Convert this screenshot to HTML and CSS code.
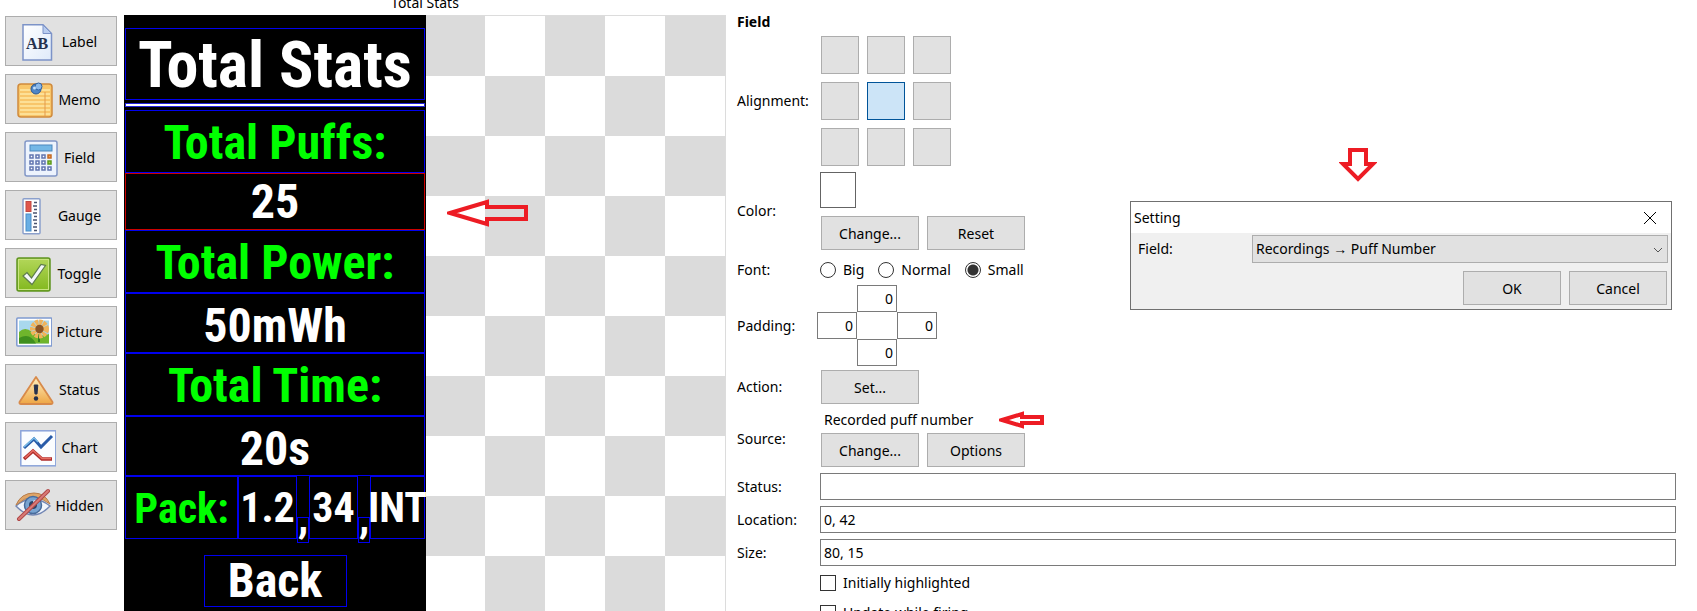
FILE: index.html
```html
<!DOCTYPE html>
<html lang="en">
<head>
<meta charset="utf-8">
<title>Total Stats</title>
<link rel="stylesheet" href="styles.css">
</head>
<body>
<div class="editor">
  <nav class="tools" aria-label="Elements">
    <button class="btn tool"><svg class="icon" viewBox="0 0 36 36"><defs><linearGradient id="paper" x1="0" y1="0" x2="1" y2="1"><stop offset="0" stop-color="#fff"/><stop offset="1" stop-color="#dfeafa"/></linearGradient></defs><path d="M2 .8H22L30.500 9.500V36H2Z" fill="url(#paper)" stroke="#7c93c8" stroke-width="1.500"/><path d="M22 1V9.500H30.500Z" fill="#b9cdf0" stroke="#7c93c8"/><text x="16" y="25" class="glyph">AB</text></svg>Label</button>
    <button class="btn tool"><svg class="icon" viewBox="0 0 36 36"><rect x="1" y="2" width="34" height="33" rx="3" fill="#f8c66a" stroke="#d08a3c" stroke-width="1.500"/><path d="M3 8H33M3 12H33M3 16H33M3 20H33M3 24H33M3 28H33M3 32H33" stroke="#fde096" stroke-width="2"/><path d="M28 10V34" stroke="#e39a4c"/><circle cx="19" cy="7" r="5" fill="#4f86c6" stroke="#2a5794"/><circle cx="21.500" cy="4.500" r="3.500" fill="#8bb8e8" stroke="#2f62a3"/><circle cx="17.500" cy="6" r="1.500" fill="#c5e0fa"/></svg>Memo</button>
    <button class="btn tool"><svg class="icon" viewBox="0 0 36 36"><rect x="2" y="1" width="32" height="35" rx="2" fill="#edf3fd" stroke="#8196c6" stroke-width="1.500"/><rect x="7" y="5" width="22" height="6" fill="#74b7e6" stroke="#4c87bd"/><g fill="#fff" stroke="#6075b0" stroke-width="1.500"><rect x="7" y="15" width="3" height="3"/><rect x="13" y="15" width="3" height="3"/><rect x="19" y="15" width="3" height="3"/><rect x="7" y="21" width="3" height="3"/><rect x="13" y="21" width="3" height="3"/><rect x="19" y="21" width="3" height="3"/><rect x="7" y="27" width="3" height="3"/><rect x="13" y="27" width="3" height="3"/><rect x="19" y="27" width="3" height="3"/><rect x="25" y="27" width="3" height="3"/></g><rect x="25" y="15" width="3" height="3" fill="#f3a35c" stroke="#c46a24" stroke-width="1.500"/><rect x="25" y="21" width="3" height="3" fill="#a8d84a" stroke="#5d9a1c" stroke-width="1.500"/></svg>Field</button>
    <button class="btn tool"><svg class="icon" viewBox="0 0 36 36"><rect x="6" y=".8" width="17" height="35" rx="1" fill="#fff" stroke="#8ba0cc" stroke-width="1.500"/><rect x="9" y="3.500" width="5" height="10" fill="#e0574c" stroke="#c04a44"/><rect x="9" y="16" width="5" height="17" fill="#69aee4" stroke="#4a8dc8"/><path d="M17 4.500H20M16 8H20M17 11.500H20M16 15H20M17 18.500H20M16 22H20M17 25.500H20M16 29H20M17 32.500H20" stroke="#4a5470" stroke-width="1.500"/></svg>Gauge</button>
    <button class="btn tool"><svg class="icon" viewBox="0 0 36 36"><defs><linearGradient id="green" x1="0" y1="0" x2="0" y2="1"><stop offset="0" stop-color="#b3d75a"/><stop offset="1" stop-color="#82b81e"/></linearGradient></defs><rect x="1" y="2" width="33" height="33" rx="2" fill="url(#green)" stroke="#5f9420" stroke-width="1.500"/><rect x="2.500" y="3.500" width="30" height="30" fill="none" stroke="#c8e480"/><path d="M7 20L11 16.500L15.500 22L25 8.500L29.500 9.500L16 28.500Z" fill="#f4f7fa" stroke="#5d7c4a" stroke-width="1.200"/></svg>Toggle</button>
    <button class="btn tool"><svg class="icon" viewBox="0 0 36 36"><rect x="0.800" y="4" width="35" height="28" rx="1" fill="#fff" stroke="#7f9ad0" stroke-width="1.500"/><rect x="3" y="6.500" width="30" height="23" fill="#a9d8ee"/><path d="M3 18Q9 12 16 18T33 20V29.500H3Z" fill="#6fb52c"/><path d="M3 24Q14 18 20 29.500H3Z" fill="#3f8f1e"/><path d="M23 28V20" stroke="#2f7f1e" stroke-width="2"/><circle cx="23.500" cy="15" r="6.500" fill="none" stroke="#f0b35a" stroke-width="6" stroke-dasharray="3 .7"/><circle cx="23.500" cy="15" r="4.200" fill="#8a5426"/></svg>Picture</button>
    <button class="btn tool"><svg class="icon" viewBox="0 0 36 36"><defs><linearGradient id="amber" x1="0" y1="0" x2="0" y2="1"><stop offset="0" stop-color="#fff0c0"/><stop offset="1" stop-color="#eea645"/></linearGradient></defs><path d="M18 5L34.500 30Q35 32 33 32H3Q1 32 1.500 30Z" fill="url(#amber)" stroke="#d88a4a" stroke-width="1.800" stroke-linejoin="round"/><path d="M16.200 13H19.800L19 22H17Z" fill="#26324e" stroke="#26324e"/><circle cx="18" cy="26.500" r="2.200" fill="#26324e"/></svg>Status</button>
    <button class="btn tool"><svg class="icon" viewBox="0 0 36 36"><rect x=".8" y=".8" width="35" height="35" fill="#fbfdff" stroke="#8ba4da" stroke-width="1.500"/><path d="M4 18L14 9L21 17L32 6" fill="none" stroke="#285ba8" stroke-width="3"/><path d="M4 17L14 8L18 12" fill="none" stroke="#78bce8" stroke-width="1.500"/><path d="M4 29L13 21L22 29H32" fill="none" stroke="#b02e2c" stroke-width="3.500"/><path d="M5 28L13 20.500L22 28.500H31" fill="none" stroke="#e76f64" stroke-width="1.500"/></svg>Chart</button>
    <button class="btn tool"><svg class="icon" viewBox="0 0 36 36"><path d="M1 18Q17 4 35 18Q18 36 1 18Z" fill="#f1f5fc" stroke="#7387b4" stroke-width="1.500"/><path d="M1 17Q6 5 19 5Q30 5 35 16Q18 2 1 17Z" fill="#dfa568" stroke="#b87d4a"/><circle cx="18" cy="17" r="8.500" fill="#78a3d0" stroke="#486c9c" stroke-width="1.500"/><circle cx="18" cy="17" r="4" fill="#2a4468"/><circle cx="20" cy="14" r="2" fill="#cfe5f8"/><path d="M4 31L33 3" stroke="#b04848" stroke-width="4" stroke-linecap="round"/><path d="M4 31L33 3" stroke="#d87a76" stroke-width="2" stroke-linecap="round"/></svg>Hidden</button>
  </nav>

  <main class="stage">
    <h1 class="stage-title">Total Stats</h1>
    <div class="board">
      <div class="screen">
        <div class="cell heading">Total Stats</div>
        <div class="rule"></div>
        <div class="cell name">Total Puffs:</div>
        <div class="cell selected">25</div>
        <div class="cell name">Total Power:</div>
        <div class="cell value">50mWh</div>
        <div class="cell name">Total Time:</div>
        <div class="cell value">20s</div>
        <div class="pack">
          <div class="cell name">Pack:</div>
          <div class="cell">1.2</div>
          <div class="comma">,</div>
          <div class="cell">34</div>
          <div class="comma">,</div>
          <div class="cell">INT</div>
        </div>
        <div class="cell back">Back</div>
      </div>
      <svg class="arrow arrow-field" viewBox="0 0 82 30"><path d="M3 15L40 4V9H79V21H40V26Z"/></svg>
    </div>
  </main>

  <form class="props">
    <h2 class="title">Field</h2>
    <div class="row"><span>Alignment:</span>
      <div class="align">
        <button type="button" class="btn" aria-label="Top left"></button><button type="button" class="btn" aria-label="Top"></button><button type="button" class="btn" aria-label="Top right"></button>
        <button type="button" class="btn" aria-label="Left"></button><button type="button" class="btn active" aria-label="Center"></button><button type="button" class="btn" aria-label="Right"></button>
        <button type="button" class="btn" aria-label="Bottom left"></button><button type="button" class="btn" aria-label="Bottom"></button><button type="button" class="btn" aria-label="Bottom right"></button>
      </div>
    </div>
    <div class="row"><span>Color:</span>
      <div class="stack color"><div class="swatch"></div>
        <div class="buttons"><button type="button" class="btn wide">Change...</button><button type="button" class="btn wide">Reset</button></div></div>
    </div>
    <div class="row font-row"><span>Font:</span>
      <div class="radios">
        <label class="option"><input type="radio" name="font">Big</label>
        <label class="option"><input type="radio" name="font">Normal</label>
        <label class="option"><input type="radio" name="font" checked>Small</label>
      </div>
    </div>
    <div class="row pad-row"><span>Padding:</span>
      <div class="padding">
        <input class="box top" value="0" aria-label="Top padding">
        <input class="box left" value="0" aria-label="Left padding">
        <input class="box right" value="0" aria-label="Right padding">
        <input class="box bottom" value="0" aria-label="Bottom padding">
      </div>
    </div>
    <div class="row"><span>Action:</span><div class="buttons"><button type="button" class="btn wide">Set...</button></div></div>
    <div class="row"><span>Source:</span>
      <div class="stack"><div class="source">Recorded puff number <svg class="arrow arrow-source" viewBox="0 0 46 18"><path d="M3 9L23 3V6H43V12H23V15Z"/></svg></div>
        <div class="buttons"><button type="button" class="btn wide">Change...</button><button type="button" class="btn wide">Options</button></div></div>
    </div>
    <div class="row"><label for="status">Status:</label><input class="box" id="status"></div>
    <div class="row"><label for="location">Location:</label><input class="box" id="location" value="0, 42"></div>
    <div class="row"><label for="size">Size:</label><input class="box" id="size" value="80, 15"></div>
    <div class="row"><span></span>
      <div class="checks">
        <label class="option"><input type="checkbox">Initially highlighted</label>
        <label class="option"><input type="checkbox">Update while firing</label>
      </div>
    </div>
  </form>

  <div class="popup">
    <svg class="arrow arrow-dialog" viewBox="0 0 38 36"><path d="M11 3H27V17H34L19 32L4 17H11Z"/></svg>
    <section class="dialog" role="dialog" aria-labelledby="dialog-title">
      <header class="bar"><span id="dialog-title">Setting</span><button class="close" aria-label="Close"><svg viewBox="0 0 12 12"><path d="M0 0L12 12M12 0L0 12" stroke="#000" fill="none"/></svg></button></header>
      <div class="content">
        <div class="line"><label for="field">Field:</label>
          <span class="picker"><select id="field"><option>Recordings → Puff Number</option></select><svg class="chevron" viewBox="0 0 10 6"><path d="M1 1L5 5L9 1" stroke="#555" fill="none"/></svg></span></div>
        <div class="buttons actions"><button class="btn wide">OK</button><button class="btn wide">Cancel</button></div>
      </div>
    </section>
  </div>
</div>
</body>
</html>
```
FILE: styles.css
```css
* { box-sizing: border-box; }
body {
  margin: 0;
  background: #fff;
  color: #000;
  font: 14px/20px "Noto Sans", "Open Sans", sans-serif;
}
button, input, select { font: inherit; color: inherit; }
.editor {
  position: relative;
  display: grid;
  grid-template-columns: 124px 602px 1fr;
  height: 100vh;
  overflow: hidden;
}
.btn { background: #e1e1e1; border: 1px solid #adadad; padding: 1px 0 0; }
.btn.active { background: #cce4f7; border-color: #005499; }

.tools { display: flex; flex-direction: column; gap: 8px; padding: 16px 7px 0 5px; }
.tool {
  display: flex;
  align-items: center;
  justify-content: center;
  gap: 5px;
  height: 50px;
  padding-right: 4px;
}
.icon { width: 36px; height: 38px; flex: none; }
.glyph { font: bold 16px "Liberation Serif", serif; fill: #26324e; text-anchor: middle; }

.stage { display: flex; flex-direction: column; }
.stage-title { margin: -7px 0 2px; font-size: 14px; font-weight: 400; text-align: center; }
.board {
  position: relative;
  flex: 1;
  border: solid #dcdcdc;
  border-width: 1px 1px 0 0;
  background: repeating-conic-gradient(#dbdbdb 0 25%, #fff 0 50%) 1px 0 / 120px 120px;
}
.screen {
  display: flex;
  flex-direction: column;
  width: 302px;
  height: 100%;
  margin-top: -1px;
  padding: 13px 1px 0;
  background: #000;
  color: #fff;
  font: bold 48px/56px "Roboto Condensed", "Liberation Sans Narrow", "DejaVu Sans Condensed", sans-serif;
}
.cell {
  display: flex;
  align-items: center;
  justify-content: center;
  flex: none;
  border: 1px solid #00e;
  white-space: nowrap;
}
.heading { height: 72px; padding-top: 4px; font-size: 64px; }
.rule { flex: none; height: 4px; margin: 3px 0; background: #fff; border: 1px solid #22d; }
.name { height: 63px; padding-top: 2px; color: #0f0; }
.value { height: 60px; padding-top: 6px; }
.selected { height: 57px; border-color: #c00; }
.pack {
  display: grid;
  flex: none;
  grid-template-columns: 113px 59px 12px 49px 12px 55px;
  font-size: 42px;
}
.comma { height: 26px; margin: 41px 0 -4px; border: 1px solid #00e; line-height: 0; text-align: center; }
.back { width: 143px; height: 52px; margin: 16px auto 0; }

.arrow { fill: none; stroke: #ed1c24; stroke-width: 4; }
.arrow-field { position: absolute; left: 323px; top: 182px; width: 82px; height: 30px; }
.arrow-source { width: 46px; height: 18px; }
.arrow-dialog { width: 38px; height: 36px; }

.props { display: flex; flex-direction: column; gap: 6px; padding: 12px 21px 0 11px; }
.title { margin: 0; font-size: 14px; line-height: 20px; }
.row { display: grid; grid-template-columns: 83px 1fr; align-items: center; }
.title + .row { margin-top: -2px; }
.align { display: grid; grid-template-columns: repeat(3, 38px); grid-auto-rows: 38px; gap: 8px; padding-left: 1px; }
.stack { display: flex; flex-direction: column; gap: 3px; }
.color { gap: 8px; }
.swatch { width: 36px; height: 36px; border: 1px solid #646464; }
.buttons { display: flex; gap: 8px; padding-left: 1px; }
.wide { width: 98px; height: 34px; }
.font-row { padding-top: 3px; margin-bottom: -2px; }
.radios { display: flex; gap: 14px; height: 22px; }
.option { display: flex; align-items: center; gap: 7px; height: 22px; }
.option input { appearance: none; width: 16px; height: 16px; margin: 0; border: 1px solid #333; background: #fff; }
.option input[type="radio"] { border-radius: 50%; }
.option input:checked { background: radial-gradient(#333 0 5px, #fff 6px); }
.box { width: 100%; height: 27px; padding: 0 3px; border: 1px solid #7a7a7a; background: #fff; }
.padding { display: grid; grid-template-columns: repeat(3, 40px); grid-auto-rows: 27px; margin-left: -3px; }
.pad-row { margin-bottom: -2px; }
.padding .box { text-align: right; }
.top { grid-area: 1 / 2; }
.left { grid-area: 2 / 1; }
.right { grid-area: 2 / 3; }
.bottom { grid-area: 3 / 2; }
.source { display: flex; align-items: center; gap: 26px; height: 20px; padding-left: 4px; }
.checks { display: flex; flex-direction: column; gap: 8px; }

.popup { position: absolute; top: 147px; right: 25px; width: 542px; display: flex; flex-direction: column; gap: 18px; }
.arrow-dialog { margin-left: 209px; }
.dialog { border: 1px solid #707070; background: #f0f0f0; }
.bar { display: flex; align-items: center; justify-content: space-between; height: 31px; padding: 0 15px 0 3px; background: #fff; }
.close { display: flex; padding: 0; border: 0; background: none; }
.close svg { width: 12px; height: 12px; }
.content { padding: 2px 3px 4px 7px; }
.line { display: grid; grid-template-columns: 114px 1fr; align-items: center; }
.picker { position: relative; display: flex; }
.picker select { appearance: none; width: 100%; height: 28px; padding: 0 3px; border: 1px solid #adadad; border-radius: 0; background: #e1e1e1; }
.chevron { position: absolute; right: 5px; top: 12px; width: 10px; height: 6px; }
.actions { justify-content: flex-end; margin-top: 8px; padding-right: 1px; }
```
